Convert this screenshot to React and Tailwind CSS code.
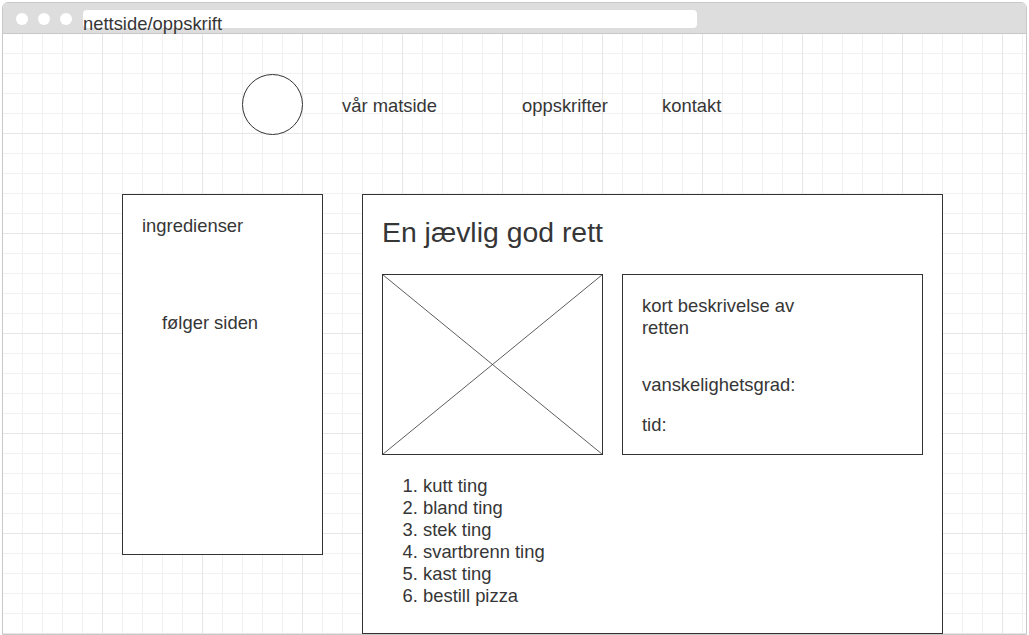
const STEPS = ["kutt ting", "bland ting", "stek ting", "svartbrenn ting", "kast ting", "bestill pizza"];

function ImagePlaceholder() {
  return (
    <svg width="221" height="181" viewBox="0 0 221 181" className="block shrink-0">
      <rect x="0.5" y="0.5" width="220" height="180" fill="#ffffff" stroke="#333333" />
      <line x1="0.5" y1="0.5" x2="220.5" y2="180.5" stroke="#333333" strokeWidth="0.8" />
      <line x1="220.5" y1="0.5" x2="0.5" y2="180.5" stroke="#333333" strokeWidth="0.8" />
    </svg>
  );
}

export default function App() {
  return (
    <div className="w-[1029px] h-[635px] bg-white pl-[2px] pt-[2px] font-['Liberation_Sans',Arial,sans-serif] text-[18.4px] leading-[22px] text-[#363636]">
      <div className="flex h-[633px] w-[1025px] flex-col rounded-t-[6px] border border-[#c8c8c8]">
        {/* title bar */}
        <div className="flex h-[31px] shrink-0 items-start rounded-t-[5px] border-b border-[#c8c8c8] bg-[#dddddd] pl-[13px]">
          <div className="mt-[10px] flex gap-[10px]">
            <span className="h-[12px] w-[12px] rounded-full bg-white" />
            <span className="h-[12px] w-[12px] rounded-full bg-white" />
            <span className="h-[12px] w-[12px] rounded-full bg-white" />
          </div>
          <div className="relative ml-[11px] mt-[7px] h-[18px] w-[614px] rounded-[4px] bg-white">
            <span className="absolute left-0 top-[5px] whitespace-nowrap text-[18.4px] leading-none">nettside/oppskrift</span>
          </div>
        </div>

        {/* canvas */}
        <div className="flex-1 bg-[linear-gradient(to_right,#e6e6e6_1px,transparent_1px),linear-gradient(to_bottom,#e6e6e6_1px,transparent_1px),linear-gradient(to_right,#f1f1f1_1px,transparent_1px),linear-gradient(to_bottom,#f1f1f1_1px,transparent_1px)] bg-[length:100px_100px,100px_100px,20px_20px,20px_20px] bg-size-[100px_100px,100px_100px,20px_20px,20px_20px] bg-[position:-1px_-1px] bg-position-[-1px_-1px] pt-[40px]">
          <nav className="flex items-center pl-[239px]">
            <div className="h-[61px] w-[61px] shrink-0 rounded-full border border-[#333333] bg-white" />
            <span className="ml-[39px] w-[180px] pt-[2px]">vår matside</span>
            <span className="w-[140px] pt-[2px]">oppskrifter</span>
            <span className="pt-[2px]">kontakt</span>
          </nav>

          <div className="mt-[59px] flex items-start gap-[39px] pl-[119px]">
            <aside className="h-[361px] w-[201px] shrink-0 border border-[#333333] bg-white pl-[19px] pt-[20px]">
              <p>ingredienser</p>
              <p className="ml-[20px] mt-[75px]">følger siden</p>
            </aside>

            <main className="h-[440px] w-[581px] shrink-0 border border-[#333333] bg-white pl-[19px] pt-[22px]">
              <h1 className="text-[28.4px] leading-[30px]">En jævlig god rett</h1>
              <div className="mt-[27px] flex gap-[19px]">
                <ImagePlaceholder />
                <div className="h-[181px] w-[301px] shrink-0 border border-[#333333] pl-[19px] pt-[20px]">
                  <p>
                    kort beskrivelse av
                    <br />
                    retten
                  </p>
                  <p className="mt-[35px]">vanskelighetsgrad:</p>
                  <p className="mt-[18px]">tid:</p>
                </div>
              </div>
              <ol className="mt-[20px] list-decimal pl-[41px]">
                {STEPS.map((step) => (
                  <li key={step}>{step}</li>
                ))}
              </ol>
            </main>
          </div>
        </div>
      </div>
    </div>
  );
}
